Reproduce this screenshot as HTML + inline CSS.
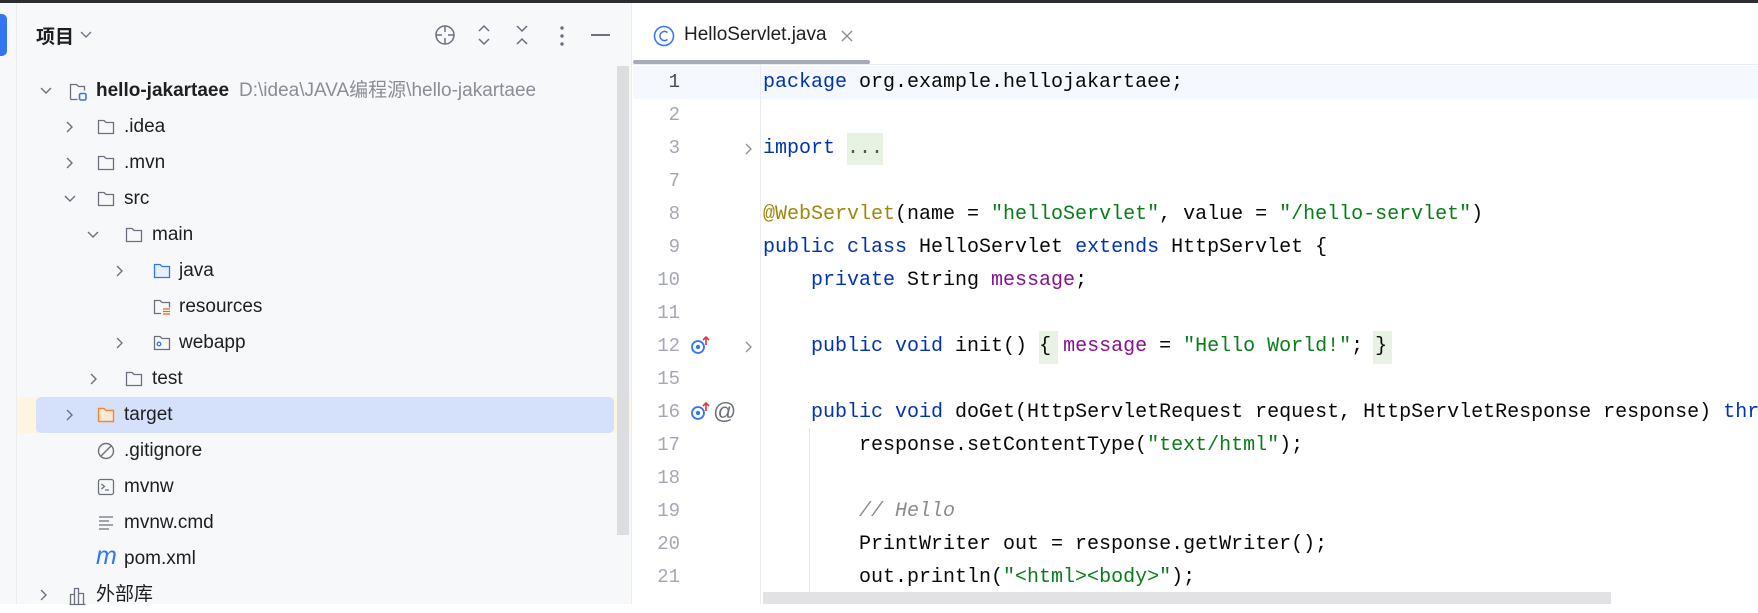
<!DOCTYPE html>
<html><head><meta charset="utf-8"><style>
*{margin:0;padding:0;box-sizing:border-box}
body{width:1758px;height:604px;overflow:hidden;background:#fff;position:relative;font-family:"Liberation Sans","Noto Sans CJK SC",sans-serif}
.abs{position:absolute}
.row{position:absolute;left:17px;width:600px;height:36px;font-size:19px;color:#1e1f22;line-height:36px}
.row span{position:absolute;white-space:nowrap}
.row svg{position:absolute;top:9px}
.code{position:absolute;left:763px;font-family:"Liberation Mono",monospace;font-size:20px;white-space:pre;color:#080808;line-height:33px;height:33px}
.ln{position:absolute;left:633px;width:47px;text-align:right;font-family:"Liberation Mono",monospace;font-size:19px;color:#a4a8b4;line-height:33px}
.k{color:#0033b3}.s{color:#067d17}.a{color:#9e880d}.f{color:#871094}.c{color:#8c8c8c;font-style:italic}
</style></head><body>
<div class="abs" style="left:0;top:0;width:1758px;height:3px;background:#2b2d30"></div>
<div class="abs" style="left:0;top:3px;width:17px;height:601px;background:#f7f8fa;border-right:1px solid #ebecf0"></div>
<div class="abs" style="left:0;top:14px;width:7px;height:42px;background:#3574f0;border-radius:0 5px 5px 0"></div>
<div class="abs" style="left:17px;top:3px;width:615px;height:601px;background:#f7f8fa;border-right:1px solid #ebecf0"></div>
<div class="abs" style="left:36px;top:22px;font-size:19px;font-weight:bold;color:#1e1f22">项目</div>
<svg class="abs" style="left:80px;top:30px" width="12" height="10"><path d="M1 2l5 5 5-5" fill="none" stroke="#6c707e" stroke-width="1.3"/></svg>
<svg class="abs" style="left:434px;top:24px" width="22" height="22" fill="none" stroke="#6c707e" stroke-width="1.5"><circle cx="11" cy="11" r="9"/><path d="M11 2v6M11 14v6M2 11h6M14 11h6"/></svg>
<svg class="abs" style="left:477px;top:23px" width="14" height="24" fill="none" stroke="#6c707e" stroke-width="1.5"><path d="M2 8l5-5 5 5M2 16l5 5 5-5"/></svg>
<svg class="abs" style="left:515px;top:23px" width="14" height="24" fill="none" stroke="#6c707e" stroke-width="1.5"><path d="M2 3l5 5 5-5M2 21l5-5 5 5"/></svg>
<svg class="abs" style="left:558px;top:25px" width="8" height="22" fill="#6c707e"><circle cx="4" cy="3" r="1.7"/><circle cx="4" cy="11" r="1.7"/><circle cx="4" cy="19" r="1.7"/></svg>
<div class="abs" style="left:591px;top:34px;width:19px;height:1.6px;background:#6c707e"></div>
<div class="abs" style="left:17px;top:397px;width:614px;height:36px;background:#fdf5e2"></div>
<div class="abs" style="left:36px;top:397px;width:578px;height:36px;background:#d5e1fb;border-radius:5px"></div>
<div class="abs" style="left:617px;top:66px;width:12px;height:469px;background:#dcdde0"></div>

<div class="row" style="top:73px">
<svg style="left:22px;top:13px" width="14" height="10"><path d="M2 2l5 5 5-5" fill="none" stroke="#6c707e" stroke-width="1.4"/></svg>
<svg style="left:52px" width="20" height="20" fill="none" stroke="#6c707e" stroke-width="1.3"><path d="M1.5 17.5V2.5h6l2 2h6v4"/><path d="M1.5 17.5h7"/><rect x="10.5" y="11.5" width="6.5" height="6.5" rx="1.5" stroke="#3574f0" stroke-width="1.6"/></svg>
<span style="left:79px;font-weight:bold">hello-jakartaee</span><span style="left:222px;color:#8a8d96">D:\idea\JAVA编程源\hello-jakartaee</span></div>

<div class="row" style="top:109px"><svg style="left:48px;top:11px" width="10" height="14"><path d="M2 2l5 5-5 5" fill="none" stroke="#6c707e" stroke-width="1.4"/></svg>
<svg style="left:80px" width="18" height="18" fill="none" stroke="#6c707e" stroke-width="1.3"><path d="M1.5 15.5V2.5h5.5l2 2h7.5v11z"/></svg><span style="left:107px">.idea</span></div>
<div class="row" style="top:145px"><svg style="left:48px;top:11px" width="10" height="14"><path d="M2 2l5 5-5 5" fill="none" stroke="#6c707e" stroke-width="1.4"/></svg>
<svg style="left:80px" width="18" height="18" fill="none" stroke="#6c707e" stroke-width="1.3"><path d="M1.5 15.5V2.5h5.5l2 2h7.5v11z"/></svg><span style="left:107px">.mvn</span></div>
<div class="row" style="top:181px"><svg style="left:46px;top:13px" width="14" height="10"><path d="M2 2l5 5 5-5" fill="none" stroke="#6c707e" stroke-width="1.4"/></svg>
<svg style="left:80px" width="18" height="18" fill="none" stroke="#6c707e" stroke-width="1.3"><path d="M1.5 15.5V2.5h5.5l2 2h7.5v11z"/></svg><span style="left:107px">src</span></div>
<div class="row" style="top:217px"><svg style="left:69px;top:13px" width="14" height="10"><path d="M2 2l5 5 5-5" fill="none" stroke="#6c707e" stroke-width="1.4"/></svg>
<svg style="left:108px" width="18" height="18" fill="none" stroke="#6c707e" stroke-width="1.3"><path d="M1.5 15.5V2.5h5.5l2 2h7.5v11z"/></svg><span style="left:135px">main</span></div>
<div class="row" style="top:253px"><svg style="left:98px;top:11px" width="10" height="14"><path d="M2 2l5 5-5 5" fill="none" stroke="#6c707e" stroke-width="1.4"/></svg>
<svg style="left:136px" width="18" height="18" fill="#e7effd" stroke="#3574f0" stroke-width="1.3"><path d="M1.5 15.5V2.5h5.5l2 2h7.5v11z"/></svg><span style="left:162px">java</span></div>
<div class="row" style="top:289px">
<svg style="left:136px" width="18" height="18" fill="none" stroke="#6c707e" stroke-width="1.3"><path d="M8 15.5H1.5V2.5h5.5l2 2h7.5v5"/><path d="M10 11h7M10 13.5h7M10 16h7" stroke="#e66d17" stroke-width="1.3"/></svg><span style="left:162px">resources</span></div>
<div class="row" style="top:325px"><svg style="left:98px;top:11px" width="10" height="14"><path d="M2 2l5 5-5 5" fill="none" stroke="#6c707e" stroke-width="1.3"/></svg>
<svg style="left:136px" width="18" height="18" fill="none" stroke="#6c707e" stroke-width="1.3"><path d="M1.5 15.5V2.5h5.5l2 2h7.5v11z"/><circle cx="6" cy="10" r="1.8" stroke="#3574f0"/></svg><span style="left:162px">webapp</span></div>
<div class="row" style="top:361px"><svg style="left:72px;top:11px" width="10" height="14"><path d="M2 2l5 5-5 5" fill="none" stroke="#6c707e" stroke-width="1.4"/></svg>
<svg style="left:108px" width="18" height="18" fill="none" stroke="#6c707e" stroke-width="1.3"><path d="M1.5 15.5V2.5h5.5l2 2h7.5v11z"/></svg><span style="left:135px">test</span></div>
<div class="row" style="top:397px"><svg style="left:48px;top:11px" width="10" height="14"><path d="M2 2l5 5-5 5" fill="none" stroke="#6c707e" stroke-width="1.4"/></svg>
<svg style="left:80px" width="18" height="18" fill="#fde8d6" stroke="#e88a3a" stroke-width="1.4"><path d="M1.5 15.5V2.5h5.5l2 2h7.5v11z"/></svg><span style="left:107px">target</span></div>
<div class="row" style="top:433px"><svg style="left:80px" width="18" height="18" fill="none" stroke="#6c707e" stroke-width="1.4"><circle cx="9" cy="9" r="7.5"/><path d="M4 14L14 4"/></svg><span style="left:107px">.gitignore</span></div>
<div class="row" style="top:469px"><svg style="left:80px" width="18" height="18" fill="none" stroke="#6c707e" stroke-width="1.3"><rect x="1.5" y="1.5" width="15" height="15" rx="2"/><path d="M4.5 6l3 2.5-3 2.5M8 12h4"/></svg><span style="left:107px">mvnw</span></div>
<div class="row" style="top:505px"><svg style="left:80px" width="18" height="18" fill="none" stroke="#6c707e" stroke-width="1.3"><path d="M2 3h14M2 7h10M2 11h14M2 15h10"/></svg><span style="left:107px">mvnw.cmd</span></div>
<div class="row" style="top:541px"><span style="left:79px;color:#3574f0;font-style:italic;font-size:25px;top:-3px">m</span><span style="left:107px">pom.xml</span></div>
<div class="row" style="top:577px"><svg style="left:22px;top:11px" width="10" height="14"><path d="M2 2l5 5-5 5" fill="none" stroke="#6c707e" stroke-width="1.4"/></svg>
<svg style="left:52px" width="18" height="20" fill="none" stroke="#6c707e" stroke-width="1.3"><path d="M1.5 18.5V8.5h4v10M5.5 18.5V2.5h4v16M9.5 18.5V7.5h5v11M0.5 18.5h16"/></svg><span style="left:79px">外部库</span></div>

<div class="abs" style="left:633px;top:60px;width:237px;height:4px;background:#a7abb8;border-radius:2px"></div>
<div class="abs" style="left:633px;top:64px;width:1125px;height:1px;background:#ebecf0"></div>
<svg class="abs" style="left:653px;top:25px" width="22" height="22" fill="none" stroke="#3574f0" stroke-width="1.5"><circle cx="11" cy="11" r="9.5"/><path d="M14.5 7.5a4.6 4.6 0 1 0 0 7"/></svg>
<div class="abs" style="left:684px;top:24px;font-size:19px;color:#1e1f22">HelloServlet.java</div>
<svg class="abs" style="left:840px;top:29px" width="14" height="14" stroke="#8c8f99" stroke-width="1.4"><path d="M2 2l10 10M12 2L2 12"/></svg>
<div class="abs" style="left:633px;top:66px;width:1125px;height:33px;background:#f5f8fe"></div>
<div class="abs" style="left:760px;top:65px;width:1px;height:539px;background:#ebecf0"></div>
<div class="abs" style="left:809px;top:428px;width:1px;height:176px;background:#e4e4e8"></div>
<div class="abs" style="left:847px;top:133px;width:36px;height:32px;background:#e8f2e3"></div>
<div class="abs" style="left:1039px;top:331px;width:19px;height:33px;background:#e8f2e3"></div>
<div class="abs" style="left:1373px;top:331px;width:19px;height:33px;background:#e8f2e3"></div>
<div class="abs" style="left:763px;top:592px;width:848px;height:12px;background:#e2e2e4"></div>

<div class="ln" style="top:66px;color:#4a4d55">1</div>
<div class="ln" style="top:99px">2</div>
<div class="ln" style="top:132px">3</div>
<div class="ln" style="top:165px">7</div>
<div class="ln" style="top:198px">8</div>
<div class="ln" style="top:231px">9</div>
<div class="ln" style="top:264px">10</div>
<div class="ln" style="top:297px">11</div>
<div class="ln" style="top:330px">12</div>
<div class="ln" style="top:363px">15</div>
<div class="ln" style="top:396px">16</div>
<div class="ln" style="top:429px">17</div>
<div class="ln" style="top:462px">18</div>
<div class="ln" style="top:495px">19</div>
<div class="ln" style="top:528px">20</div>
<div class="ln" style="top:561px">21</div>
<svg class="abs" style="left:744px;top:142px" width="10" height="14"><path d="M2 2l5 5-5 5" fill="none" stroke="#8c8f99" stroke-width="1.3"/></svg>
<svg class="abs" style="left:744px;top:340px" width="10" height="14"><path d="M2 2l5 5-5 5" fill="none" stroke="#8c8f99" stroke-width="1.3"/></svg>
<svg class="abs" style="left:690px;top:335px" width="22" height="22"><circle cx="8" cy="12" r="6" fill="none" stroke="#3574f0" stroke-width="1.8"/><circle cx="8" cy="12" r="2.2" fill="#3574f0"/><path d="M16 10V2M13 5l3-3 3 3" fill="none" stroke="#e5323e" stroke-width="1.6"/></svg>
<svg class="abs" style="left:690px;top:401px" width="22" height="22"><circle cx="8" cy="12" r="6" fill="none" stroke="#3574f0" stroke-width="1.8"/><circle cx="8" cy="12" r="2.2" fill="#3574f0"/><path d="M16 10V2M13 5l3-3 3 3" fill="none" stroke="#e5323e" stroke-width="1.6"/></svg>
<div class="abs" style="left:713px;top:398px;font-size:23px;color:#6c707e">@</div>

<div class="code" style="top:66px"><span class="k">package</span> org.example.hellojakartaee;</div>
<div class="code" style="top:132px"><span class="k">import</span> <span style="color:#545454">...</span></div>
<div class="code" style="top:198px"><span class="a">@WebServlet</span>(name = <span class="s">"helloServlet"</span>, value = <span class="s">"/hello-servlet"</span>)</div>
<div class="code" style="top:231px"><span class="k">public class</span> HelloServlet <span class="k">extends</span> HttpServlet {</div>
<div class="code" style="top:264px">    <span class="k">private</span> String <span class="f">message</span>;</div>
<div class="code" style="top:330px">    <span class="k">public void</span> init() { <span class="f">message</span> = <span class="s">"Hello World!"</span>; }</div>
<div class="code" style="top:396px">    <span class="k">public void</span> doGet(HttpServletRequest request, HttpServletResponse response) <span class="k">throws</span></div>
<div class="code" style="top:429px">        response.setContentType(<span class="s">"text/html"</span>);</div>
<div class="code" style="top:495px">        <span class="c">// Hello</span></div>
<div class="code" style="top:528px">        PrintWriter out = response.getWriter();</div>
<div class="code" style="top:561px">        out.println(<span class="s">"&lt;html&gt;&lt;body&gt;"</span>);</div>
</body></html>
